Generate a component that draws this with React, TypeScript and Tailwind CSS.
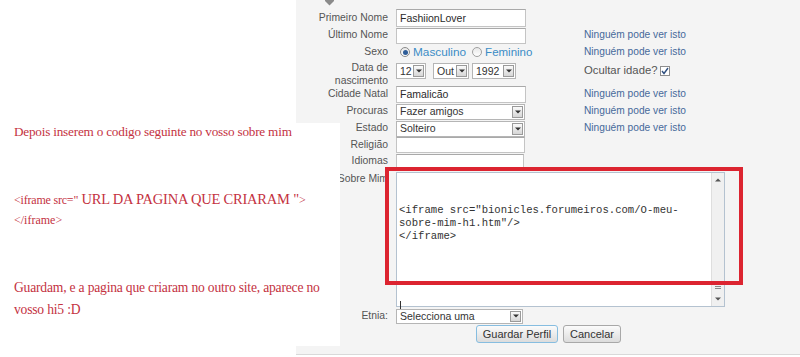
import React from "react";

function Arrow() {
  return (
    <svg width="6" height="4" viewBox="0 0 6 4">
      <polygon points="0,0.5 6,0.5 3,3.5" fill="#333" />
    </svg>
  );
}

function SelectBox({ cls, text, btn = "w-[11px]" }: { cls: string; text: string; btn?: string }) {
  return (
    <div className={`relative flex items-center bg-white border border-[#b5b5b5] text-[10.5px] text-[#333] pl-[3px] ${cls}`}>
      <span className="leading-none">{text}</span>
      <div className={`absolute right-[1px] top-[1px] bottom-[1px] ${btn} border border-[#9a9a9a] bg-gradient-to-b from-[#fafafa] to-[#d6d6d6] flex items-center justify-center`}>
        <Arrow />
      </div>
    </div>
  );
}

function Input({ cls, text = "" }: { cls: string; text?: string }) {
  return (
    <div className={`flex items-center bg-white border border-[#c4c4c4] border-t-[#a9a9a9] text-[10.5px] text-[#2a2a2a] pl-[3px] ${cls}`}>
      <span className="leading-none">{text}</span>
    </div>
  );
}

const label = "w-[92px] shrink-0 text-right text-[10.4px] text-[#555] leading-none";
const link = "text-[10.2px] text-[#46699b] leading-none";

export default function App() {
  return (
    <div className="relative w-[800px] h-[357px] bg-white overflow-hidden font-['Liberation_Sans',Arial,sans-serif]">
      {/* gray form panel */}
      <div className="ml-[296px] w-[504px] h-[355px] bg-[#f4f4f4] border-b border-[#d9d9d9] pt-[9px] flex flex-col">
        {/* Primeiro Nome */}
        <div className="flex items-center h-[18px]">
          <div className={label}>Primeiro Nome</div>
          <div className="ml-[8px] w-[188px]">
            <Input cls="w-[130px] h-[18px]" text="FashiionLover" />
          </div>
        </div>
        {/* Último Nome */}
        <div className="flex items-center h-[17px]">
          <div className={label}>Último Nome</div>
          <div className="ml-[8px] w-[188px]">
            <Input cls="w-[130px] h-[16px]" />
          </div>
          <div className={link}>Ninguém pode ver isto</div>
        </div>
        {/* Sexo */}
        <div className="flex items-center h-[17px]">
          <div className={label}>Sexo</div>
          <div className="ml-[8px] w-[188px] flex items-center">
            <div className="ml-[4px] w-[10px] h-[10px] rounded-full border border-[#8a8a8a] bg-gradient-to-b from-[#e8e8e8] to-[#ffffff] flex items-center justify-center">
              <div className="w-[5px] h-[5px] rounded-full bg-[#2f5d98]" />
            </div>
            <span className="ml-[3px] text-[11.8px] text-[#3b8cc6] leading-none">Masculino</span>
            <div className="ml-[6px] w-[10px] h-[10px] rounded-full border border-[#a0a0a0] bg-gradient-to-b from-[#e8e8e8] to-[#ffffff]" />
            <span className="ml-[3px] text-[11.5px] text-[#3b8cc6] leading-none">Feminino</span>
          </div>
          <div className={link}>Ninguém pode ver isto</div>
        </div>
        {/* Data de nascimento */}
        <div className="flex items-start h-[25px]">
          <div className="w-[92px] shrink-0 text-right text-[10.4px] text-[#555] leading-[13px]">
            Data de
            <br />
            nascimento
          </div>
          <div className="ml-[8px] w-[188px] flex items-center mt-[2px]">
            <SelectBox cls="w-[30px] h-[16px]" text="12" />
            <SelectBox cls="ml-[7px] w-[36px] h-[16px]" text="Out" />
            <SelectBox cls="ml-[3px] w-[44px] h-[16px]" text="1992" />
          </div>
          <div className="mt-[4px] flex items-center">
            <span className="text-[11.3px] text-[#555] leading-none">Ocultar idade?</span>
            <div className="ml-[3px] w-[10px] h-[10px] border border-[#8d8d8d] bg-white flex items-center justify-center">
              <svg width="8" height="8" viewBox="0 0 8 8">
                <path d="M1 4 L3 6.5 L7 1" stroke="#2f4f7f" strokeWidth="1.4" fill="none" />
              </svg>
            </div>
          </div>
        </div>
        {/* Cidade Natal */}
        <div className="flex items-center h-[17px]">
          <div className={label}>Cidade Natal</div>
          <div className="ml-[8px] w-[188px]">
            <Input cls="w-[130px] h-[17px]" text="Famalicão" />
          </div>
          <div className={link}>Ninguém pode ver isto</div>
        </div>
        {/* Procuras */}
        <div className="flex items-center h-[17px]">
          <div className={label}>Procuras</div>
          <div className="ml-[8px] w-[188px]">
            <SelectBox cls="w-[129px] h-[16px]" text="Fazer amigos" />
          </div>
          <div className={link}>Ninguém pode ver isto</div>
        </div>
        {/* Estado */}
        <div className="flex items-center h-[17px]">
          <div className={label}>Estado</div>
          <div className="ml-[8px] w-[188px]">
            <SelectBox cls="w-[129px] h-[16px]" text="Solteiro" />
          </div>
          <div className={link}>Ninguém pode ver isto</div>
        </div>
        {/* Religião */}
        <div className="flex items-center h-[16px]">
          <div className={label}>Religião</div>
          <div className="ml-[8px] w-[188px]">
            <Input cls="w-[129px] h-[16px]" />
          </div>
        </div>
        {/* Idiomas */}
        <div className="flex items-center h-[17px]">
          <div className={label}>Idiomas</div>
          <div className="ml-[8px] w-[188px]">
            <Input cls="w-[128px] h-[16px]" />
          </div>
        </div>
        {/* Sobre Mim */}
        <div className="flex items-start h-[138px]">
          <div className="w-[92px] shrink-0 text-right text-[10.4px] text-[#555] leading-[13px] mt-[2px]">Sobre Mim</div>
          <div className="ml-[8px] mt-[2px] w-[329px] h-[135px] bg-white border border-[#b4c2d0] flex">
            <div className="flex-1 pl-[2px] pt-[31px] font-['Liberation_Mono','Courier_New',monospace] text-[10.6px] leading-[13px] text-[#333] whitespace-pre">
              {'<iframe src="bionicles.forumeiros.com/O-meu-\nsobre-mim-h1.htm"/>\n</iframe>'}
              <div className="mt-[58px] ml-[1px] w-[1px] h-[11px] bg-[#333]" />
            </div>
            <div className="w-[13px] h-full border-l border-[#dedede] bg-[#f0f0f0] flex flex-col items-center justify-between py-[5px]">
              <svg width="6" height="4" viewBox="0 0 6 4">
                <polygon points="0,3.5 6,3.5 3,0.5" fill="#555" />
              </svg>
              <div className="flex flex-col items-center gap-[2px]">
                <div className="flex flex-col gap-[1px] mb-[6px]">
                  <div className="w-[6px] h-[1px] bg-[#888]" />
                  <div className="w-[6px] h-[1px] bg-[#888]" />
                  <div className="w-[6px] h-[1px] bg-[#888]" />
                </div>
                <svg width="6" height="4" viewBox="0 0 6 4">
                  <polygon points="0,0.5 6,0.5 3,3.5" fill="#555" />
                </svg>
              </div>
            </div>
          </div>
        </div>
        {/* Etnia */}
        <div className="flex items-center h-[16px]">
          <div className={label}>Etnia:</div>
          <div className="ml-[8px] w-[188px]">
            <SelectBox cls="w-[127px] h-[15px]" text="Selecciona uma" />
          </div>
        </div>
        {/* Buttons */}
        <div className="flex items-center mt-[1px] ml-[180px] gap-[5px]">
          <button className="w-[82px] h-[18px] rounded-[3px] border border-[#86bde0] bg-gradient-to-b from-[#fbfbfb] to-[#dcdcdc] text-[11px] text-[#333] leading-none">
            Guardar Perfil
          </button>
          <button className="w-[58px] h-[18px] rounded-[3px] border border-[#a8a8a8] bg-gradient-to-b from-[#fbfbfb] to-[#dcdcdc] text-[11px] text-[#333] leading-none">
            Cancelar
          </button>
        </div>
      </div>

      {/* small gray marker at top */}
      <svg className="absolute left-[325px] top-0" width="10" height="6" viewBox="0 0 10 6">
        <polygon points="0,0 9,0 9,1 4.5,5.5 0,1" fill="#8a8a8a" />
      </svg>

      {/* white note panel */}
      <div className="absolute left-0 top-[123px] w-[340px] h-[223px] bg-white pl-[14px] font-['Liberation_Serif','Times_New_Roman',serif] text-[#c4323f]">
        <div className="text-[13.2px] leading-[18px] tracking-[-0.2px]">Depois inserem o codigo seguinte no vosso sobre mim</div>
        <div className="mt-[48px] leading-[20px] tracking-[-0.2px]">
          <span className="text-[12px]">{'<iframe src="'}</span>
          <span className="text-[14.5px]">{'  URL DA PAGINA QUE CRIARAM "'}</span>
          <span className="text-[12px]">{'>'}</span>
        </div>
        <div className="text-[12px] leading-[20px]">{'</iframe>'}</div>
        <div className="mt-[47px] text-[13.6px] leading-[22px] tracking-[-0.2px]">
          Guardam, e a pagina que criaram no outro site, aparece no
          <br />
          vosso hi5 :D
        </div>
      </div>

      {/* red highlight rectangle */}
      <div className="absolute left-[385px] top-[167px] w-[358px] h-[118px] border-[4px] border-[#dc2430]" />
    </div>
  );
}
